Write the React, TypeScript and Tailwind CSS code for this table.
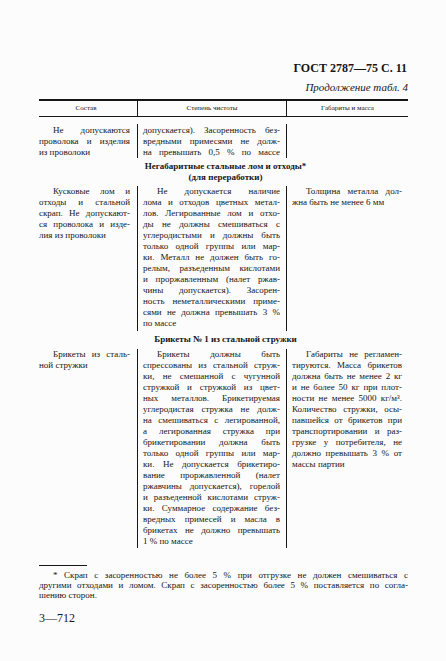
import React from "react";

const J = "[text-align-last:justify] text-justify whitespace-nowrap";

function Lines({ lines, indent = false, lastJustify = false }: { lines: string[]; indent?: boolean; lastJustify?: boolean }) {
  return (
    <div>
      {lines.map((l, i) => {
        const last = i === lines.length - 1;
        return (
          <div
            key={i}
            className={(last && !lastJustify ? "whitespace-nowrap text-left" : J) + (i === 0 && indent ? " pl-[14px]" : "")}
          >
            {l}
          </div>
        );
      })}
    </div>
  );
}

export default function App() {
  return (
    <div
      className="w-[446px] h-[661px] bg-[#fcfcfc] text-[#161616] overflow-hidden"
      style={{ fontFamily: '"Liberation Serif", "Times New Roman", serif' }}
    >
      <div className="pl-[39px] pr-[38px] pt-[61px]">
        <div className="text-right font-bold text-[12px] leading-[14px] pr-[1px]">ГОСТ 2787—75 С. 11</div>
        <div className="text-right italic text-[11px] leading-[13px] mt-[6px]">Продолжение табл. 4</div>

        <div className="mt-[5px] border-t-2 border-[#161616]" />
        <div className="grid grid-cols-[98px_149px_1fr] border-b border-[#161616] text-[7px] leading-[15px] h-[16px]">
          <div className="text-center pr-[4px]">Состав</div>
          <div className="text-center border-l border-[#161616]">Степень чистоты</div>
          <div className="text-center border-l border-[#161616]">Габариты и масса</div>
        </div>

        <div className="text-[9px] leading-[11px]">
          {/* Row 1 */}
          <div className="grid grid-cols-[98px_149px_1fr] mt-[7px]">
            <div className="pr-[7px] pt-[0.5px]">
              <Lines indent lines={["Не допускаются", "проволока и изделия", "из проволоки"]} />
            </div>
            <div className="border-l border-[#161616] pl-[5px] pr-[6px] pt-[0.5px]">
              <Lines lastJustify lines={["допускается). Засоренность без-", "вредными примесями не долж-", "на превышать 0,5 % по массе"]} />
            </div>
            <div className="border-l border-[#161616]" />
          </div>

          {/* Heading 1 */}
          <div className="text-center font-bold text-[9px] leading-[11px] mt-[3px] pl-[4px]">
            <div>Негабаритные стальные лом и отходы*</div>
            <div>(для переработки)</div>
          </div>

          {/* Row 2 */}
          <div className="grid grid-cols-[98px_149px_1fr] mt-[3.5px]">
            <div className="pr-[7px]">
              <Lines indent lines={["Кусковые лом и", "отходы и стальной", "скрап. Не допускают-", "ся проволока и изде-", "лия из проволоки"]} />
            </div>
            <div className="border-l border-[#161616] pl-[5px] pr-[6px] pb-[1.5px]">
              <Lines
                indent
                lines={[
                  "Не допускается наличие",
                  "лома и отходов цветных метал-",
                  "лов. Легированные лом и отхо-",
                  "ды не должны смешиваться с",
                  "углеродистыми и должны быть",
                  "только одной группы или мар-",
                  "ки. Металл не должен быть го-",
                  "релым, разъеденным кислотами",
                  "и проржавленным (налет ржав-",
                  "чины допускается). Засорен-",
                  "ность неметаллическими приме-",
                  "сями не должна превышать 3 %",
                  "по массе",
                ]}
              />
            </div>
            <div className="border-l border-[#161616] pl-[5px] pr-[6px]">
              <Lines indent lines={["Толщина металла дол-", "жна  быть не менее 6 мм"]} />
            </div>
          </div>

          {/* Heading 2 */}
          <div className="text-center font-bold text-[9px] leading-[11px] mt-[3px] pl-[4px]">
            Брикеты № 1 из стальной стружки
          </div>

          {/* Row 3 */}
          <div className="grid grid-cols-[98px_149px_1fr] mt-[4px]">
            <div className="pr-[7px]">
              <Lines indent lines={["Брикеты из сталь-", "ной стружки"]} />
            </div>
            <div className="border-l border-[#161616] pl-[5px] pr-[6px] pb-[1px]">
              <Lines
                indent
                lines={[
                  "Брикеты должны быть",
                  "спрессованы из стальной струж-",
                  "ки, не смешанной с чугунной",
                  "стружкой и стружкой из цвет-",
                  "ных металлов. Брикетируемая",
                  "углеродистая стружка не долж-",
                  "на смешиваться с легированной,",
                  "а легированная стружка при",
                  "брикетировании должна быть",
                  "только одной группы или мар-",
                  "ки. Не допускается брикетиро-",
                  "вание проржавленной (налет",
                  "ржавчины допускается), горелой",
                  "и разъеденной кислотами струж-",
                  "ки. Суммарное содержание без-",
                  "вредных примесей и масла в",
                  "брикетах не должно превышать",
                  "1 % по массе",
                ]}
              />
            </div>
            <div className="border-l border-[#161616] pl-[5px] pr-[6px]">
              <Lines
                indent
                lines={[
                  "Габариты не регламен-",
                  "тируются. Масса брикетов",
                  "должна быть не менее 2 кг",
                  "и не более 50 кг при плот-",
                  "ности не менее 5000 кг/м³.",
                  "Количество стружки, осы-",
                  "павшейся от брикетов при",
                  "транспортировании и раз-",
                  "грузке у потребителя, не",
                  "должно превышать 3 % от",
                  "массы партии",
                ]}
              />
            </div>
          </div>
        </div>

        {/* Footnote */}
        <div className="mt-[17px] w-[48px] border-t border-[#161616]" />
        <div className="text-[9px] leading-[10px] mt-[4px]">
          <Lines
            indent
            lines={[
              "* Скрап с засоренностью не более 5 % при отгрузке не должен смешиваться с",
              "другими отходами и ломом. Скрап с засоренностью более 5 % поставляется по согла-",
              "шению сторон.",
            ]}
          />
        </div>
        <div className="text-[12px] leading-[13px] mt-[12.5px]">3—712</div>
      </div>
    </div>
  );
}
